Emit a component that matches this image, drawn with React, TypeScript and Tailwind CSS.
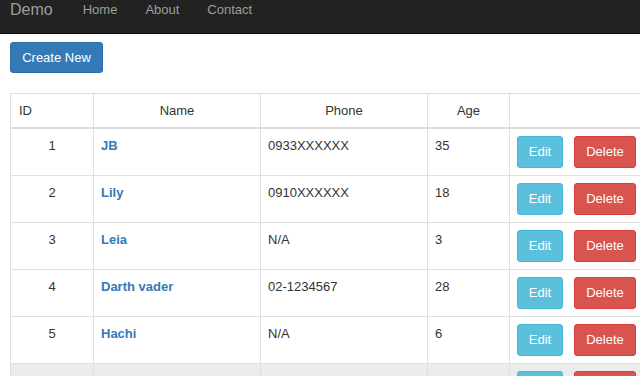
import React from "react";

const rows = [
  { id: 1, name: "JB", phone: "0933XXXXXX", age: "35" },
  { id: 2, name: "Lily", phone: "0910XXXXXX", age: "18" },
  { id: 3, name: "Leia", phone: "N/A", age: "3" },
  { id: 4, name: "Darth vader", phone: "02-1234567", age: "28" },
  { id: 5, name: "Hachi", phone: "N/A", age: "6" },
  { id: 6, name: "", phone: "", age: "" },
];

function Row({ r, last }: { r: (typeof rows)[number]; last?: boolean }) {
  return (
    <div className={`flex h-[47px] shrink-0 border-b border-[#dde0e0] ${last ? "bg-[#ececec]" : ""}`}>
      <div className="w-[83px] shrink-0 border-r border-[#dde0e0] pt-[8px] text-center">{r.name ? r.id : ""}</div>
      <div className="w-[167px] shrink-0 border-r border-[#dde0e0] pt-[8px] pl-[7px] font-bold text-[#337ab7]">{r.name}</div>
      <div className="w-[167px] shrink-0 border-r border-[#dde0e0] pt-[8px] pl-[7px]">{r.phone}</div>
      <div className="w-[82px] shrink-0 border-r border-[#dde0e0] pt-[8px] pl-[7px]">{r.age}</div>
      <div className="flex w-[160px] shrink-0 items-start pt-[7px] pl-[7px]">
        <button className="flex h-[32px] w-[46px] items-center justify-center rounded-[3px] border border-[#46b8da] bg-[#5bc0de] text-white">Edit</button>
        <button className="ml-[11px] flex h-[32px] w-[62px] items-center justify-center rounded-[3px] border border-[#d43f3a] bg-[#d9534f] text-white">Delete</button>
      </div>
    </div>
  );
}

export default function App() {
  return (
    <div
      className="h-[376px] w-[640px] overflow-hidden bg-white text-[13px] leading-[18px] text-[#333]"
      style={{ fontFamily: '"Liberation Sans", Arial, sans-serif' }}
    >
      <div className="flex h-[34px] items-start border-b border-[#080808] bg-[#222] pt-[1px] text-[#9d9d9d]">
        <span className="ml-[10px] text-[16px] leading-[18px]">Demo</span>
        <span className="ml-[30px]">Home</span>
        <span className="ml-[28px]">About</span>
        <span className="ml-[28px]">Contact</span>
      </div>
      <div className="px-[10px] pt-[8px]">
        <button className="flex h-[31px] w-[93px] items-center justify-center rounded-[3px] border border-[#2e6da4] bg-[#337ab7] text-white">
          Create New
        </button>
        <div className="mt-[20px] flex w-[700px] flex-col border-t border-l border-[#dde0e0]">
          <div className="flex h-[35px] shrink-0 border-b-2 border-[#dddddd]">
            <div className="flex w-[83px] shrink-0 items-center border-r border-[#dde0e0] pl-[8px]">ID</div>
            <div className="flex w-[167px] shrink-0 items-center justify-center border-r border-[#dde0e0]">Name</div>
            <div className="flex w-[167px] shrink-0 items-center justify-center border-r border-[#dde0e0]">Phone</div>
            <div className="flex w-[82px] shrink-0 items-center justify-center border-r border-[#dde0e0]">Age</div>
            <div className="w-[160px] shrink-0"></div>
          </div>
          {rows.map((r, i) => (
            <Row key={i} r={r} last={i === rows.length - 1} />
          ))}
        </div>
      </div>
    </div>
  );
}
